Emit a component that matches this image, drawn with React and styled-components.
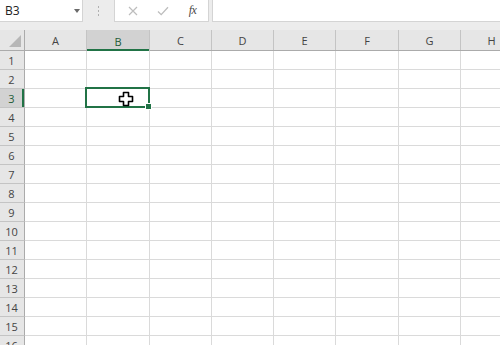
import React from "react";
import styled, { createGlobalStyle } from "styled-components";

const Global = createGlobalStyle`
  html, body { margin: 0; padding: 0; background: #fff; }
  body { font-family: "Open Sans", "Noto Sans", "Liberation Sans", sans-serif; }
`;

const COLS = [
  { id: "A", w: 62 },
  { id: "B", w: 63 },
  { id: "C", w: 62 },
  { id: "D", w: 62 },
  { id: "E", w: 62 },
  { id: "F", w: 63 },
  { id: "G", w: 62 },
  { id: "H", w: 62 },
];
const ROWS = Array.from({ length: 16 }, (_, i) => i + 1);
const SEL_COL = "B";
const SEL_ROW = 3;

const Frame = styled.div`
  width: 500px;
  height: 345px;
  overflow: hidden;
  background: #fff;
  display: flex;
  flex-direction: column;
`;

const FormulaBar = styled.div`
  display: flex;
  height: 22px;
  padding-bottom: 8px;
  background: #ececec;
  flex-shrink: 0;
`;

const NameBox = styled.div`
  width: 83px;
  height: 22px;
  box-sizing: border-box;
  background: #fff;
  border-right: 1px solid #d4d4d4;
  border-bottom: 1px solid #d4d4d4;
  display: flex;
  align-items: center;
  padding-left: 5px;
  font-size: 12px;
  color: #222;
  position: relative;
`;

const DropArrow = styled.span`
  position: absolute;
  right: 1px;
  top: 9px;
  width: 0;
  height: 0;
  border-left: 3.5px solid transparent;
  border-right: 3.5px solid transparent;
  border-top: 4px solid #6a6a6a;
  margin-right: 1px;
`;

const Grip = styled.div`
  width: 31px;
  display: flex;
  flex-direction: column;
  align-items: center;
  justify-content: center;
  gap: 2px;
  padding-bottom: 1px;
`;

const GripDot = styled.span`
  width: 1px;
  height: 2px;
  background: #b0b0b0;
`;

const ButtonBox = styled.div`
  width: 95px;
  height: 22px;
  box-sizing: border-box;
  background: #fff;
  border: 1px solid #d4d4d4;
  border-top: none;
  display: flex;
  align-items: center;
  padding-left: 9px;
  gap: 13px;
`;

const IconSlot = styled.span`
  width: 17px;
  display: flex;
  justify-content: center;
  align-items: center;
`;

const FxLabel = styled.span`
  font-family: "Liberation Serif", "DejaVu Serif", serif;
  font-style: italic;
  font-size: 12px;
  color: #4a4a4a;
  letter-spacing: -0.5px;
`;

const FormulaInput = styled.div`
  flex: 1;
  margin-left: 3px;
  height: 22px;
  box-sizing: border-box;
  background: #fff;
  border-left: 1px solid #d4d4d4;
  border-bottom: 1px solid #d4d4d4;
`;

const Sheet = styled.div`
  display: flex;
  flex-direction: column;
  flex: 1;
`;

const HeaderRow = styled.div`
  display: flex;
  height: 20px;
  flex-shrink: 0;
  background: #e6e6e6;
  border-bottom: 1px solid #ababab;
  box-sizing: border-box;
  height: 21px;
`;

const Corner = styled.div`
  width: 25px;
  flex-shrink: 0;
  box-sizing: border-box;
  border-right: 1px solid #ababab;
  position: relative;
`;

const CornerTriangle = styled.span`
  position: absolute;
  right: 3px;
  bottom: 3px;
  width: 0;
  height: 0;
  border-left: 12px solid transparent;
  border-bottom: 12px solid #b7b7b7;
`;

const ColHead = styled.div`
  width: ${(p) => p.$w}px;
  flex-shrink: 0;
  box-sizing: border-box;
  border-right: 1px solid #c4c4c4;
  display: flex;
  align-items: center;
  justify-content: center;
  font-size: 11px;
  color: ${(p) => (p.$sel ? "#1e5c36" : "#444")};
  background: ${(p) => (p.$sel ? "#d2d2d2" : "transparent")};
  box-shadow: ${(p) => (p.$sel ? "inset 0 -2px 0 #217346" : "none")};
  margin-bottom: ${(p) => (p.$sel ? "-1px" : "0")};
  padding-top: 1px;
`;

const Row = styled.div`
  display: flex;
  height: 19px;
  flex-shrink: 0;
`;

const RowHead = styled.div`
  width: 25px;
  flex-shrink: 0;
  box-sizing: border-box;
  background: ${(p) => (p.$sel ? "#d2d2d2" : "#e6e6e6")};
  border-right: 1px solid #ababab;
  border-bottom: 1px solid #c4c4c4;
  box-shadow: ${(p) => (p.$sel ? "inset -2px 0 0 #217346" : "none")};
  display: flex;
  align-items: center;
  justify-content: center;
  font-size: 11px;
  color: ${(p) => (p.$sel ? "#1e5c36" : "#444")};
  padding-right: 1px;
`;

const Cell = styled.div`
  width: ${(p) => p.$w}px;
  flex-shrink: 0;
  box-sizing: border-box;
  border-right: 1px solid #dadada;
  border-bottom: 1px solid #dadada;
  position: relative;
`;

const Selection = styled.div`
  position: absolute;
  left: -2px;
  top: -2px;
  right: -1px;
  bottom: -1px;
  border: 2px solid #217346;
  z-index: 2;
`;

const FillHandle = styled.span`
  position: absolute;
  right: -4px;
  bottom: -4px;
  width: 5px;
  height: 5px;
  background: #217346;
  border: 1px solid #fff;
`;

const Cursor = styled.svg`
  position: absolute;
  left: 31px;
  top: 2px;
  z-index: 3;
`;

export default function App() {
  return (
    <Frame>
      <Global />
      <FormulaBar>
        <NameBox>
          B3
          <DropArrow />
        </NameBox>
        <Grip>
          <GripDot />
          <GripDot />
          <GripDot />
        </Grip>
        <ButtonBox>
          <IconSlot>
            <svg width="10" height="10" viewBox="0 0 10 10">
              <path d="M1 1L9 9M9 1L1 9" stroke="#bdbdbd" strokeWidth="1.2" fill="none" />
            </svg>
          </IconSlot>
          <IconSlot>
            <svg width="12" height="10" viewBox="0 0 12 10">
              <path d="M1 5.5L4.2 8.6L11 1.2" stroke="#bdbdbd" strokeWidth="1.3" fill="none" />
            </svg>
          </IconSlot>
          <IconSlot>
            <FxLabel>fx</FxLabel>
          </IconSlot>
        </ButtonBox>
        <FormulaInput />
      </FormulaBar>
      <Sheet>
        <HeaderRow>
          <Corner>
            <CornerTriangle />
          </Corner>
          {COLS.map((c) => (
            <ColHead key={c.id} $w={c.w} $sel={c.id === SEL_COL}>
              {c.id}
            </ColHead>
          ))}
        </HeaderRow>
        {ROWS.map((r) => (
          <Row key={r}>
            <RowHead $sel={r === SEL_ROW}>{r}</RowHead>
            {COLS.map((c) => (
              <Cell key={c.id} $w={c.w}>
                {r === SEL_ROW && c.id === SEL_COL && (
                  <Selection>
                    <FillHandle />
                    <Cursor width="16" height="16" viewBox="0 0 16 16">
                      <path
                        d="M5.5 1.5H10.5V5.5H14.5V10.5H10.5V14.5H5.5V10.5H1.5V5.5H5.5Z"
                        fill="#fff"
                        stroke="#000"
                        strokeWidth="1.6"
                        strokeLinejoin="round"
                      />
                    </Cursor>
                  </Selection>
                )}
              </Cell>
            ))}
          </Row>
        ))}
      </Sheet>
    </Frame>
  );
}
